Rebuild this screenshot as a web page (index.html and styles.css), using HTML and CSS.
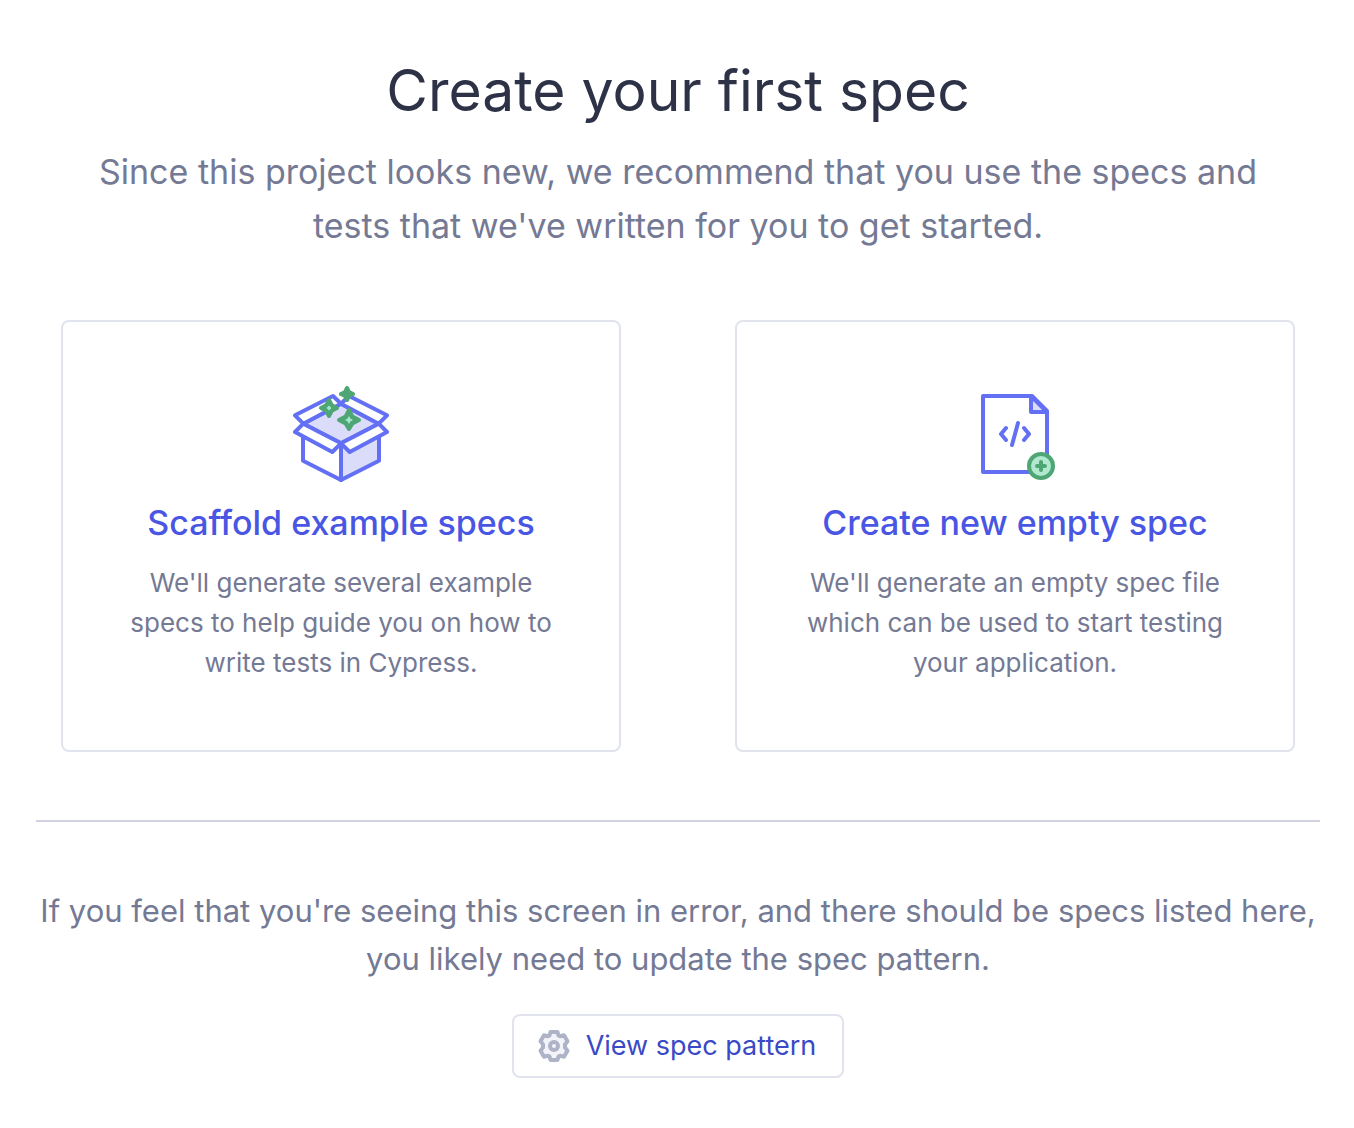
FILE: index.html
```html
<!DOCTYPE html>
<html lang="en">
<head>
<meta charset="utf-8">
<meta name="viewport" content="width=device-width, initial-scale=1">
<title>Create your first spec</title>
<link rel="stylesheet" href="styles.css">
</head>
<body>
<main class="page">
  <header class="intro">
    <h1 class="title">Create your first spec</h1>
    <p class="lead">Since this project looks new, we recommend that you use the specs and tests that we've written for you to get started.</p>
  </header>

  <section class="cards">
    <article class="card">
      <svg class="card-icon" viewBox="0 0 96 96" aria-hidden="true">
        <g stroke="#6470f3" stroke-width="4" stroke-linejoin="round" stroke-linecap="round">
          <path d="M10 44V74.7L48 94V57z" fill="#fff"/>
          <path d="M86 44V74.7L48 94V57z" fill="#dadcfa"/>
          <path d="M10.3 37.7L48 17.7L85.7 37.7L48 57.3z" fill="#dadcfa"/>
          <path d="M10.3 37.7L2 29.3L40 10L48 17.7z" fill="#fff"/>
          <path d="M85.7 37.7L94 29.3L56 10L48 17.7z" fill="#fff"/>
          <path d="M10.3 37.7L2 46L39.3 66L48 57.3z" fill="#fff"/>
          <path d="M85.7 37.7L94 46L56.7 66L48 57.3z" fill="#fff"/>
        </g>
        <g fill="#4fa675" stroke="#4fa675" stroke-width="4" stroke-linejoin="round">
          <path d="M54 2L56 6L60 8L56 10L54 14L52 10L48 8L52 6z"/>
          <path d="M36 14L38.8 19.2L44 22L38.8 24.8L36 30L33.2 24.8L28 22L33.2 19.2z"/>
          <path d="M56 24L59.4 30.6L66 34L59.4 37.4L56 43L52.6 37.4L46 34L52.6 30.6z"/>
        </g>
        <path d="M36 19.5L38.5 22L36 24.5L33.5 22zM56 30L57.4 32.6L60 34L57.4 35.4L56 38L54.6 35.4L52 34L54.6 32.6z" fill="#a3e7cb"/>
      </svg>
      <h2 class="card-title"><a href="#scaffold">Scaffold example specs</a></h2>
      <p class="card-text">We'll generate several example specs to help guide you on how to write tests in Cypress.</p>
    </article>

    <article class="card">
      <svg class="card-icon" viewBox="0 0 96 96" aria-hidden="true">
        <g fill="none" stroke="#6470f3" stroke-width="4" stroke-linejoin="round" stroke-linecap="round">
          <path d="M16 10H65L80 25V86H16z"/>
          <path d="M64 10V26H80z" fill="#dadcfa"/>
          <path d="M39 42L34 48L39 54M57 42L62 48L57 54M51 37L45 59"/>
        </g>
        <circle cx="74" cy="80" r="12" fill="#b2e8cf" stroke="#4fa675" stroke-width="4"/>
        <path d="M74 76V84M70 80H78" stroke="#4fa675" stroke-width="4" stroke-linecap="round"/>
      </svg>
      <h2 class="card-title"><a href="#empty">Create new empty spec</a></h2>
      <p class="card-text">We'll generate an empty spec file which can be used to start testing your application.</p>
    </article>
  </section>

  <footer class="help">
    <p class="help-text">If you feel that you're seeing this screen in error, and there should be specs listed here, you likely need to update the spec pattern.</p>
    <button class="pattern-button" type="button">
      <svg class="gear" viewBox="0 0 32 32" aria-hidden="true">
        <path d="M12.5 2H19.5L20.5 5.5L22 6.3L26 5.3L29.5 11.3L27 14.5V17.5L29.5 20.7L26 26.7L22 25.7L20.5 26.5L19.5 30H12.5L11.5 26.5L10 25.7L6 26.7L2.5 20.7L5 17.5V14.5L2.5 11.3L6 5.3L10 6.3L11.5 5.5z" fill="#f3f4fa" stroke="#afb3c7" stroke-width="4" stroke-linejoin="round"/>
        <circle cx="16" cy="16" r="4" fill="#f3f4fa" stroke="#afb3c7" stroke-width="4"/>
      </svg>
      <span>View spec pattern</span>
    </button>
  </footer>
</main>
</body>
</html>
```
FILE: styles.css
```css
* {
  box-sizing: border-box;
}

body {
  margin: 0;
  background: #fff;
  color: #747994;
  font-family: Inter, "Liberation Sans", sans-serif;
  text-align: center;
}

h1,
h2,
p {
  margin: 0;
  font-weight: 400;
}

.page {
  padding: 51px 34px 50px 36px;
}

.title {
  color: #2e3247;
  font-size: 57px;
  line-height: 80px;
}

.lead {
  max-width: 1200px;
  margin: 14px auto 0;
  font-size: 34px;
  line-height: 54px;
}

.cards {
  display: grid;
  grid-template-columns: 1fr 1fr;
  gap: 114px;
  padding: 67px 25px 68px;
}

.card {
  display: flex;
  flex-direction: column;
  align-items: center;
  padding: 64px 62px 67px;
  border: 2px solid #e1e3ed;
  border-radius: 8px;
}

.card-icon {
  width: 96px;
  height: 96px;
}

.card-title {
  margin-top: 17px;
  font-size: 34px;
  font-weight: 500;
  line-height: 48px;
}

.card-title a {
  color: #4956e3;
  text-decoration: none;
}

.card-text {
  margin-top: 16px;
  font-size: 26px;
  line-height: 40px;
}

.help {
  padding-top: 65px;
  border-top: 2px solid #d0d2e0;
}

.help-text {
  font-size: 31px;
  line-height: 48px;
}

.pattern-button {
  display: inline-flex;
  align-items: center;
  gap: 16px;
  margin-top: 31px;
  padding: 10px 26px 10px 24px;
  border: 2px solid #e1e3ed;
  border-radius: 8px;
  background: #fff;
  color: #3a49c6;
  font: inherit;
  font-size: 27px;
  line-height: 40px;
  cursor: pointer;
}

.gear {
  width: 32px;
  height: 32px;
}
```
